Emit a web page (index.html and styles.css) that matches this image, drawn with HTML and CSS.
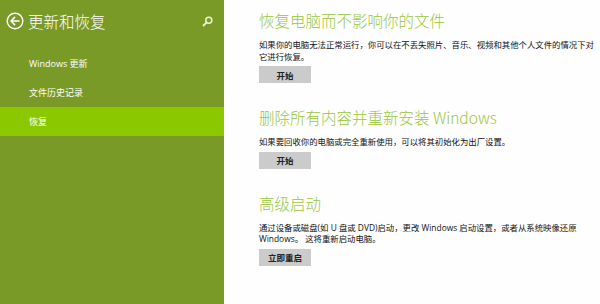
FILE: index.html
```html
<!DOCTYPE html>
<html lang="zh-CN">
<head>
<meta charset="utf-8">
<title>更新和恢复</title>
<link rel="stylesheet" href="styles.css">
</head>
<body>
<div class="app">
  <aside class="sidebar">
    <div class="header">
      <svg class="back" width="18" height="18" viewBox="0 0 18 18">
        <circle cx="9" cy="9" r="7.8" fill="none" stroke="#fff" stroke-width="1.4"/>
        <path d="M13 9H5.2M8.6 5.4L5 9l3.6 3.6" fill="none" stroke="#fff" stroke-width="1.5" stroke-linecap="round" stroke-linejoin="round"/>
      </svg>
      <h1 class="title">更新和恢复</h1>
      <svg class="search" width="11" height="11" viewBox="0 0 11 11">
        <circle cx="6.8" cy="4.2" r="3" fill="none" stroke="#eef3d8" stroke-width="1.5"/>
        <path d="M4.7 6.3L1.5 9.5" stroke="#eef3d8" stroke-width="1.8" stroke-linecap="round"/>
      </svg>
    </div>
    <nav class="menu">
      <div class="item">Windows 更新</div>
      <div class="item">文件历史记录</div>
      <div class="item active">恢复</div>
    </nav>
  </aside>
  <main class="content">
    <section class="section">
      <h2 class="heading">恢复电脑而不影响你的文件</h2>
      <p class="desc">如果你的电脑无法正常运行，你可以在不丢失照片、音乐、视频和其他个人文件的情况下对<br>它进行恢复。</p>
      <button class="btn">开始</button>
    </section>
    <section class="section">
      <h2 class="heading">删除所有内容并重新安装 Windows</h2>
      <p class="desc">如果要回收你的电脑或完全重新使用，可以将其初始化为出厂设置。</p>
      <button class="btn">开始</button>
    </section>
    <section class="section">
      <h2 class="heading">高级启动</h2>
      <p class="desc">通过设备或磁盘(如 U 盘或 DVD)启动，更改 Windows 启动设置，或者从系统映像还原<br>Windows。 这将重新启动电脑。</p>
      <button class="btn">立即重启</button>
    </section>
  </main>
</div>
</body>
</html>
```
FILE: styles.css
```css
* { box-sizing: border-box; }
html, body {
  margin: 0;
  padding: 0;
  background: #fefefe;
}
body {
  font-family: "Open Sans", "Noto Sans CJK SC", sans-serif;
  width: 600px;
  height: 304px;
  overflow: hidden;
}
.app {
  display: flex;
  height: 304px;
}
.sidebar {
  width: 224px;
  flex: none;
  background: #7a9a28;
  color: #fff;
}
.header {
  display: flex;
  align-items: center;
  height: 42px;
  padding: 0 11px 0 6px;
}
.back { flex: none; }
.title {
  flex: 1;
  margin: 0 0 0 4px;
  font-family: "Noto Sans CJK SC", sans-serif;
  font-weight: 300;
  font-size: 15.5px;
  line-height: 20px;
  color: #fff;
}
.search { flex: none; margin-top: 1px; }
.menu {
  padding-top: 7px;
}
.item {
  height: 29px;
  line-height: 29px;
  padding-left: 29px;
  font-size: 9px;
  color: #fff;
}
.item.active {
  background: #8cc800;
}
.content {
  flex: 1;
  padding: 10px 0 0 35px;
}
.section {
  margin-bottom: 24px;
}
.heading {
  margin: 0;
  font-family: "Noto Sans CJK SC", sans-serif;
  font-weight: 300;
  font-size: 15.5px;
  line-height: 20px;
  color: #99c73a;
}
.desc {
  margin: 9px 0 0;
  font-size: 8.4px;
  line-height: 11.5px;
  color: #111;
}
.btn {
  display: block;
  margin-top: 4px;
  width: 52px;
  height: 17px;
  padding: 0;
  border: none;
  background: #cbcbcb;
  font-family: "Noto Sans CJK SC", sans-serif;
  font-size: 8.5px;
  font-weight: 700;
  color: #222;
}
```
